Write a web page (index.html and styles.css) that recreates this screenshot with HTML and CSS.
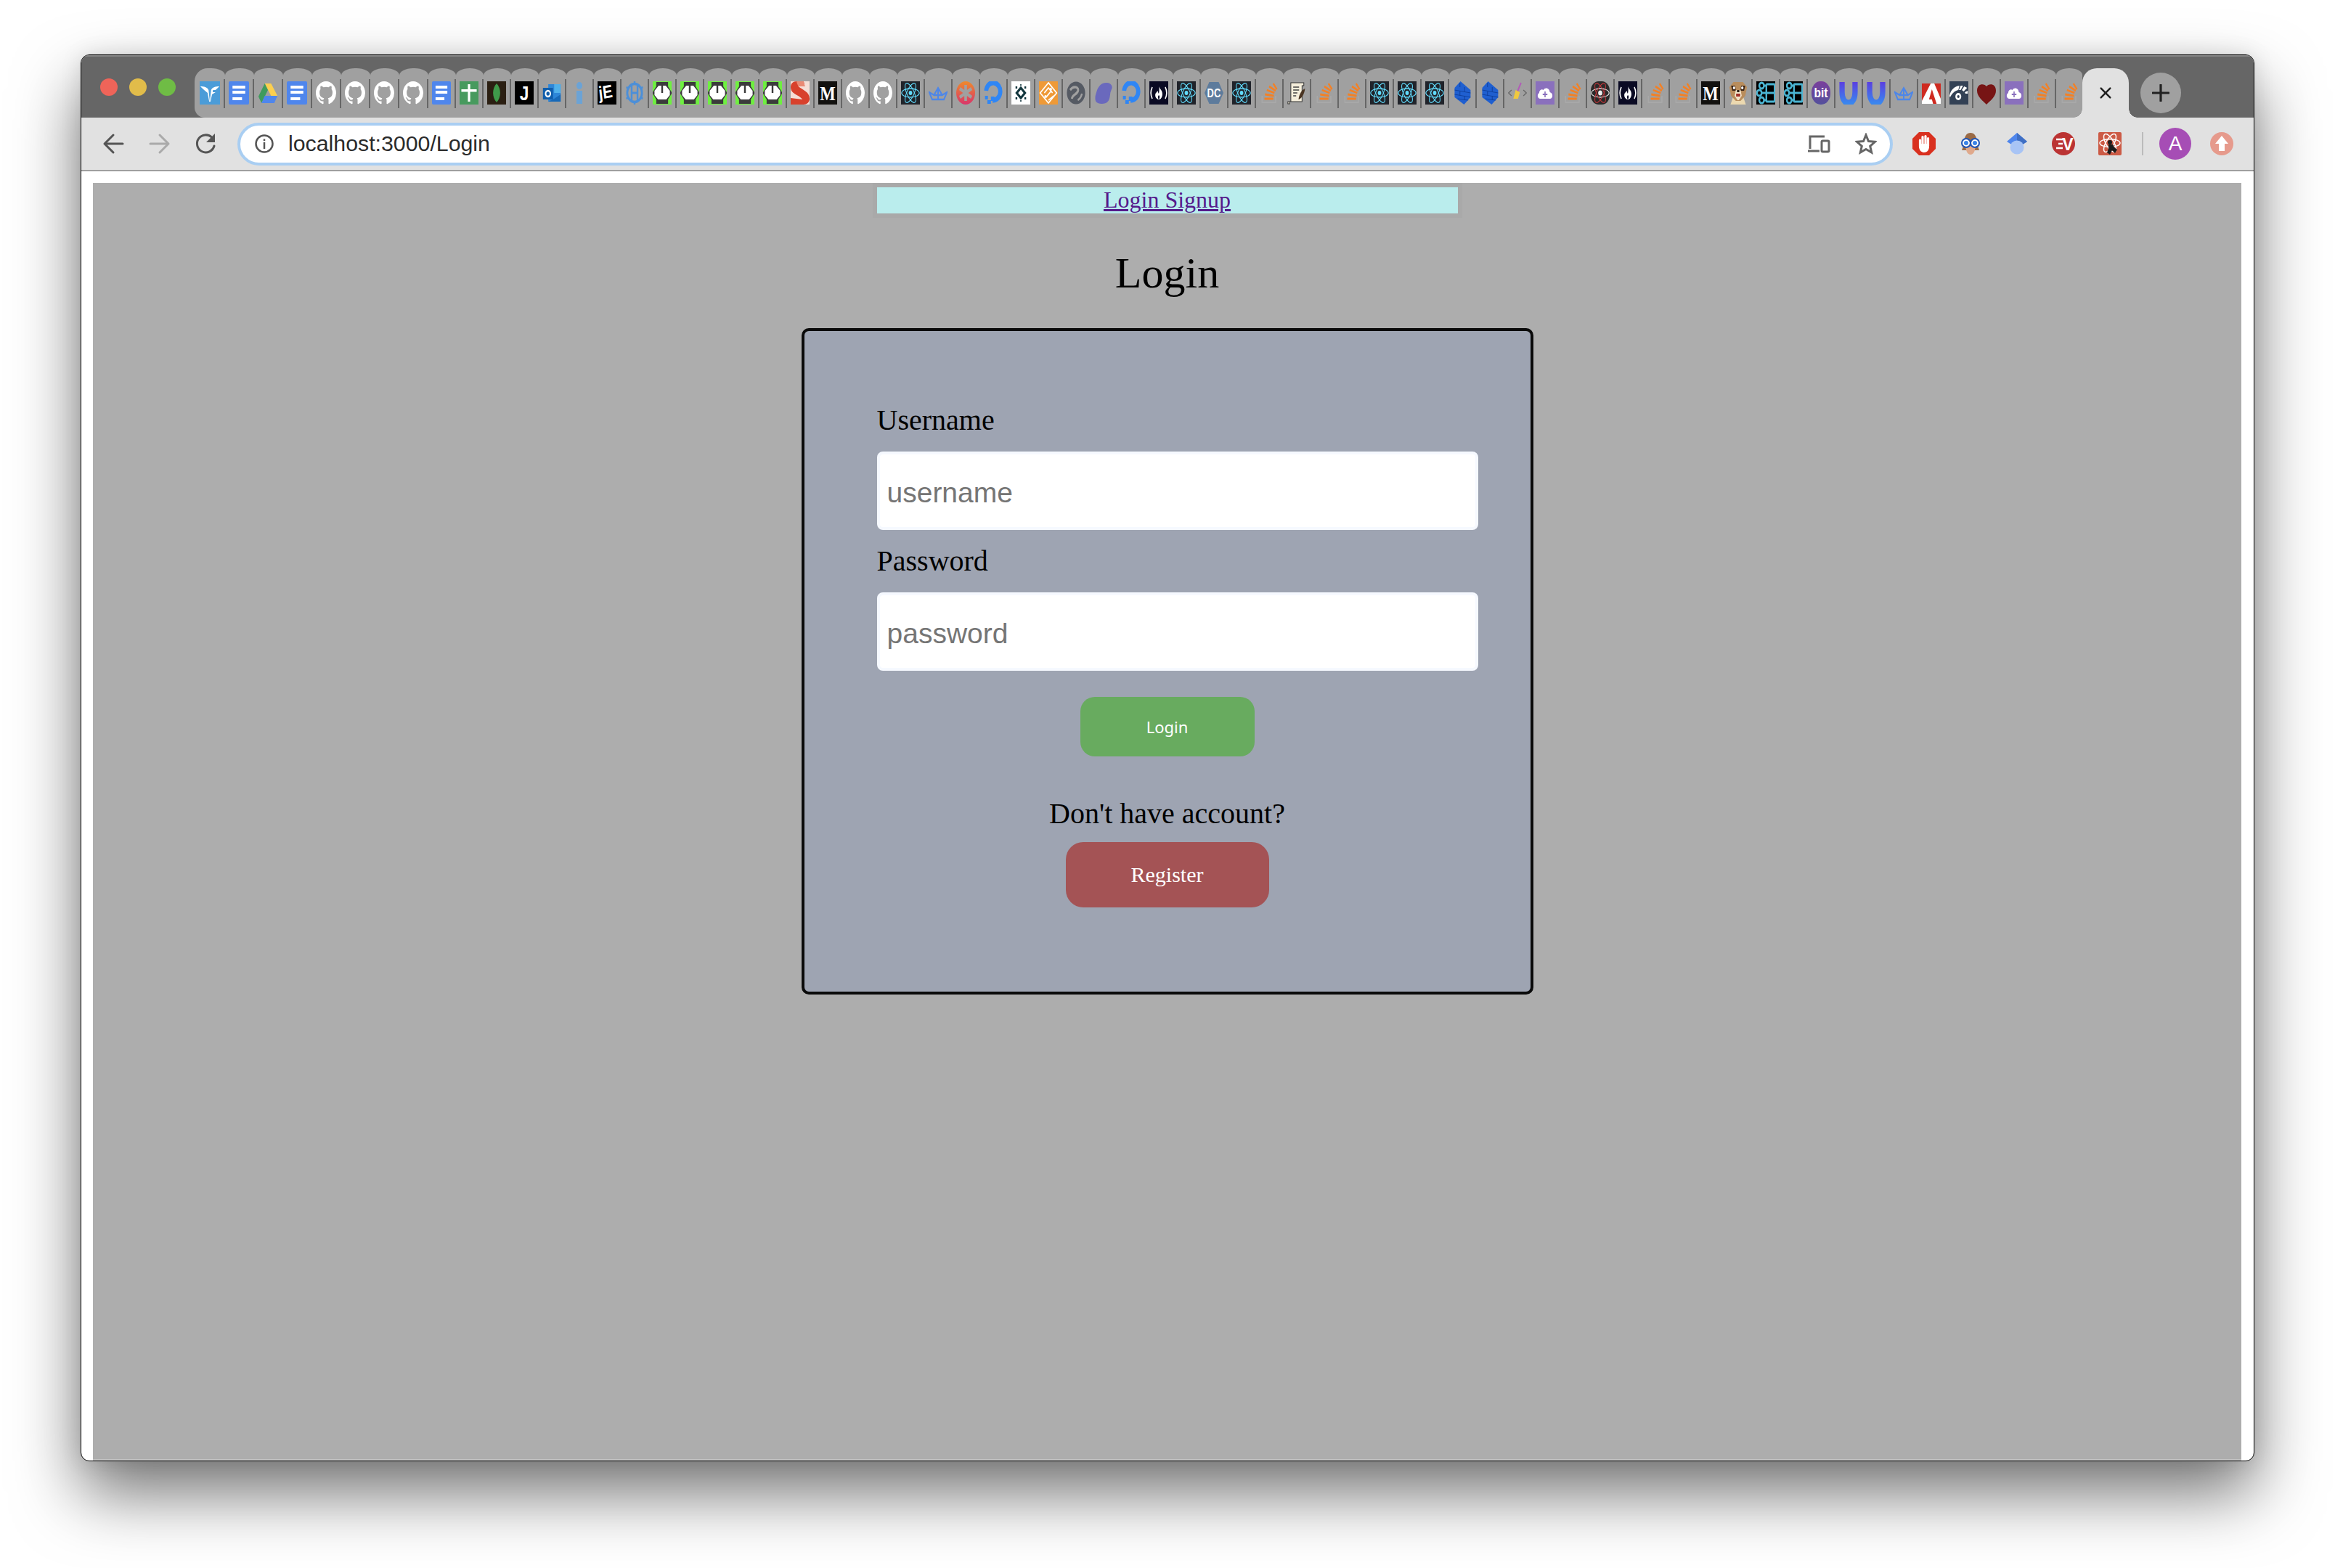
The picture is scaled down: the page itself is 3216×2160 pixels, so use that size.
FILE: index.html
```html
<!DOCTYPE html>
<html lang="en">
<head>
    <meta charset="UTF-8">
    <meta name="viewport" content="width=device-width, initial-scale=1.0">
    <title>Login</title>
    <link rel="stylesheet" href="styles.css">
</head>
<body>
    <!-- Favicons, drawn once and reused in the tab strip -->
    <svg class="icon-defs" aria-hidden="true">
        <defs>
            <linearGradient id="gradStar" x1="0" y1="0" x2="0" y2="1"><stop offset="0" stop-color="#ee8a2c"/><stop offset="1" stop-color="#d8356b"/></linearGradient>
            <linearGradient id="gradU" x1="0" y1="0" x2="0" y2="1"><stop offset="0" stop-color="#5a3fe0"/><stop offset="1" stop-color="#3a86ee"/></linearGradient>
            <linearGradient id="gradBit" x1="0" y1="0" x2="0" y2="1"><stop offset="0" stop-color="#7a3f9c"/><stop offset="1" stop-color="#54509c"/></linearGradient>
            <symbol id="i-vf" viewBox="0 0 32 32" preserveAspectRatio="none"><rect width="32" height="32" fill="#4b9cd8"/><path d="M1 7C7 7 12 8 14 12L16 28L18 12C20 8 25 7 31 7L25 12H21L20.500 15H25L19.500 18L17 28H15L12.500 16L7 12Z" fill="#fff"/></symbol>
            <symbol id="i-doc" viewBox="0 0 32 32" preserveAspectRatio="none"><rect width="32" height="32" rx="2" fill="#4f86ec"/><path d="M6 6H26V10H6ZM6 13H26V17H6ZM6 22H21V26H6Z" fill="#fff"/></symbol>
            <symbol id="i-drive" viewBox="0 0 32 32" preserveAspectRatio="none"><path d="M11 3H21L31 20H21Z" fill="#fbcf4f"/><path d="M11 3L1 21L6 30L16 12Z" fill="#3f9b5c"/><path d="M6 30H26L31 20H11Z" fill="#4f86ec"/></symbol>
            <symbol id="i-gh" viewBox="0 0 16 16" preserveAspectRatio="none"><path fill="#fff" d="M8 0C3.580 0 0 3.580 0 8c0 3.540 2.290 6.530 5.470 7.590.400.070.550-.170.550-.380 0-.190-.010-.820-.010-1.490-2.010.370-2.530-.490-2.690-.940-.090-.230-.480-.940-.820-1.130-.280-.150-.680-.520-.010-.530.630-.010 1.080.580 1.230.820.720 1.210 1.870.870 2.330.660.070-.520.280-.870.510-1.070-1.780-.200-3.640-.890-3.640-3.950 0-.870.310-1.590.820-2.150-.080-.200-.360-1.020.080-2.120 0 0 .670-.210 2.200.820.640-.180 1.320-.270 2-.270.680 0 1.360.090 2 .270 1.530-1.040 2.200-.820 2.200-.820.440 1.100.160 1.920.080 2.120.510.560.820 1.270.820 2.150 0 3.070-1.870 3.750-3.650 3.950.290.250.540.730.540 1.480 0 1.070-.010 1.930-.010 2.200 0 .210.150.460.550.380A8.013 8.013 0 0016 8c0-4.420-3.580-8-8-8z"/></symbol>
            <symbol id="i-sheet" viewBox="0 0 32 32" preserveAspectRatio="none"><rect width="32" height="32" fill="#479a5e"/><path d="M14 4H18V11H29V14.500H18V28H14V14.500H3V11H14Z" fill="#fff"/></symbol>
            <symbol id="i-mongo" viewBox="0 0 32 32" preserveAspectRatio="none"><rect width="32" height="32" fill="#2b1f12"/><path d="M16 3C24 10 24 22 16 29C8 22 8 10 16 3Z" fill="#3f9a4a"/></symbol>
            <symbol id="i-j" viewBox="0 0 32 32" preserveAspectRatio="none"><rect width="32" height="32" fill="#000"/><text x="16" y="26" class="fav-sans" font-size="28" text-anchor="middle" fill="#fff">J</text></symbol>
            <symbol id="i-outlook" viewBox="0 0 32 32" preserveAspectRatio="none"><rect x="10" y="4" width="21" height="24" fill="#2d86d8"/><rect x="20" y="4" width="11" height="12" fill="#50b0ea"/><path d="M10 28H31V18L20 24Z" fill="#1769b8"/><rect x="1" y="9" width="17" height="16" fill="#0f5dab"/><circle cx="9.500" cy="17" r="4" fill="none" stroke="#fff" stroke-width="2.500"/></symbol>
            <symbol id="i-info" viewBox="0 0 32 32" preserveAspectRatio="none"><circle cx="16" cy="6" r="5" fill="#6ba3d6"/><rect x="11" y="13" width="10" height="18" fill="#6ba3d6"/></symbol>
            <symbol id="i-je" viewBox="0 0 32 32" preserveAspectRatio="none"><rect width="32" height="32" fill="#000"/><text class="fav-sans" font-size="25" fill="#fff" transform="rotate(-8 16 16)" x="2" y="23">jE</text></symbol>
            <symbol id="i-helm" viewBox="0 0 32 32" preserveAspectRatio="none"><circle cx="16" cy="16" r="12.500" fill="none" stroke="#4c8fd8" stroke-width="3.500"/><path d="M11 6V26M21 6V26M11 16H21M16 0V4M16 28V32M2 8L6 10M30 8L26 10M2 24L6 22M30 24L26 22" fill="none" stroke="#4c8fd8" stroke-width="3"/></symbol>
            <symbol id="i-power" viewBox="0 0 32 32" preserveAspectRatio="none"><rect width="32" height="32" fill="#6ef03f"/><path d="M6 1H26V7L32 15V17L26 25V31H6V25L0 17V15L6 7Z" fill="#3b3b3b"/><path d="M10 6H22L29 13V19L23 25H9L3 19V13Z" fill="#fff"/><rect x="14.500" y="3" width="3" height="13" fill="#3b3b3b"/></symbol>
            <symbol id="i-s" viewBox="0 0 32 32" preserveAspectRatio="none"><rect width="32" height="32" fill="#f5ded6"/><path d="M0 32V23L20 25C14 18 0 18 0 8C0 3 4 0 10 0H22L24 7L13 7C20 12 32 14 32 24C32 29 27 32 22 32Z" fill="#d8412c"/><path d="M10 0H22L24 7L13 7C12 5 10 2 10 0Z" fill="#e98a74"/></symbol>
            <symbol id="i-m" viewBox="0 0 32 32" preserveAspectRatio="none"><rect width="32" height="32" fill="#12110f"/><text x="16" y="26" class="fav-serif" font-size="28" text-anchor="middle" fill="#fff">M</text></symbol>
            <symbol id="i-react" viewBox="0 0 32 32" preserveAspectRatio="none"><rect width="32" height="32" fill="#20232a"/><g fill="none" stroke="#61dafb" stroke-width="1.300"><ellipse cx="16" cy="16" rx="15" ry="6"/><ellipse cx="16" cy="16" rx="15" ry="6" transform="rotate(60 16 16)"/><ellipse cx="16" cy="16" rx="15" ry="6" transform="rotate(120 16 16)"/></g><circle cx="16" cy="16" r="3" fill="#61dafb"/></symbol>
            <symbol id="i-boat" viewBox="0 0 32 32" preserveAspectRatio="none"><path d="M1 15L9 19L16 9L23 19L31 15L26 25H6ZM9 19H23M16 9V25" fill="none" stroke="#4d86e8" stroke-width="2.400"/></symbol>
            <symbol id="i-star" viewBox="0 0 32 32" preserveAspectRatio="none"><circle cx="16" cy="16" r="16" fill="url(#gradStar)"/><path d="M16 5V27M6 10L26 22M26 10L6 22" stroke="#a0a0a0" stroke-width="4.500"/></symbol>
            <symbol id="i-do" viewBox="0 0 32 32" preserveAspectRatio="none"><path d="M15 26A12 12 0 1 0 4 13" fill="none" stroke="#2f86f5" stroke-width="7"/><path d="M12 21H18V27H12ZM6 26H12V31H6ZM2 20H7V25H2Z" fill="#2f86f5"/></symbol>
            <symbol id="i-diamond" viewBox="0 0 32 32" preserveAspectRatio="none"><rect width="32" height="32" fill="#fff"/><path d="M16 9L23 16L16 23L9 16Z" fill="none" stroke="#12363d" stroke-width="3.500"/><path d="M7 7H10V10H7ZM22 7H25V10H22ZM7 22H10V25H7ZM22 22H25V25H22ZM15 4H17V6H15ZM15 26H17V28H15Z" fill="#12363d"/></symbol>
            <symbol id="i-circuit" viewBox="0 0 32 32" preserveAspectRatio="none"><rect width="32" height="32" fill="#ef9a37"/><path d="M16 2L30 16L16 30L2 16ZM9 16L16 9L23 16M12 22L20 14M16 26L25 20" fill="none" stroke="#fff" stroke-width="1.800"/><circle cx="20" cy="11" r="2" fill="#fff"/><circle cx="11" cy="21" r="2" fill="#fff"/></symbol>
            <symbol id="i-swirl" viewBox="0 0 32 32" preserveAspectRatio="none"><circle cx="16" cy="16" r="15.500" fill="#555a63"/><path d="M6 12C12 5 22 8 19 14C16 19 10 18 9 24" fill="none" stroke="#a0a0a0" stroke-width="3.500"/><path d="M26 17C25 21 23 24 19 26" fill="none" stroke="#a0a0a0" stroke-width="3"/></symbol>
            <symbol id="i-blob" viewBox="0 0 32 32" preserveAspectRatio="none"><path d="M20 2C28 1 33 7 29 12C26 17 28 22 24 27C20 32 7 32 3 28C0 23 3 17 5 12C8 6 13 2 20 2Z" fill="#6a69bd"/></symbol>
            <symbol id="i-fcc" viewBox="0 0 32 32" preserveAspectRatio="none"><rect width="32" height="32" fill="#0a0a23"/><path d="M16 7C18 11 23 13 22 19C21 24 18 25 16 25C14 25 10 23 10 19C10 16 13 15 14 13C15 15 15 16 16 17C17 14 17 10 16 7Z" fill="#fff"/><path d="M16 19C18 20 18 23 16 25C14 23 14 21 16 19Z" fill="#0a0a23"/><path d="M5 8C2 13 2 19 5 24M27 8C30 13 30 19 27 24" fill="none" stroke="#fff" stroke-width="2"/></symbol>
            <symbol id="i-dc" viewBox="0 0 32 32" preserveAspectRatio="none"><path d="M8 1H24L32 16L24 31H8L0 16Z" fill="#5d7b9c"/><text x="16" y="22" class="fav-sans" font-size="16" text-anchor="middle" fill="#fff">DC</text></symbol>
            <symbol id="i-so" viewBox="0 0 32 32" preserveAspectRatio="none"><path d="M8 24H23M9 18L24 20M12 12L25 16M16 7L27 13M23 3L29 11" fill="none" stroke="#f48024" stroke-width="2.800"/><path d="M4 20V29H27V20" fill="none" stroke="#a8a8a8" stroke-width="2"/></symbol>
            <symbol id="i-scroll" viewBox="0 0 32 32" preserveAspectRatio="none"><path d="M6 2H28V6H25V28H4V31H1V28H6Z" fill="#f5eedb" stroke="#333" stroke-width="1.200"/><path d="M10 8H20M10 12H20M10 16H17M10 20H15" stroke="#444" stroke-width="1.300"/><path d="M30 10C24 12 20 18 19 25C24 24 29 18 30 10Z" fill="#4a3422"/></symbol>
            <symbol id="i-stack" viewBox="0 0 32 32" preserveAspectRatio="none"><path d="M13 0L30 12V22L19 32L3 22V9Z" fill="#1f5fd0"/><path d="M3 12L30 16M3 18L30 22M8 24L26 26M12 2V8M20 8V14M12 14V20M20 20V26" fill="none" stroke="#0e3f9c" stroke-width="1"/></symbol>
            <symbol id="i-broom" viewBox="0 0 32 32" preserveAspectRatio="none"><path d="M6 12L1 16L6 20M26 12L31 16L26 20" fill="none" stroke="#666" stroke-width="1.500"/><path d="M22 2L16 14" stroke="#b25cb8" stroke-width="2.500"/><path d="M13 12L20 15L17 24H9Z" fill="#f0c93e"/></symbol>
            <symbol id="i-cloud" viewBox="0 0 32 32" preserveAspectRatio="none"><rect width="32" height="32" fill="#8a70bd"/><path d="M8 24C3 24 2 18 6 16C6 12 11 10 13 12C17 7 24 10 24 15C30 16 30 24 24 24Z" fill="#fff"/><path d="M16 14V22M12 18H20" fill="none" stroke="#8a70bd" stroke-width="2"/></symbol>
            <symbol id="i-atom" viewBox="0 0 32 32" preserveAspectRatio="none"><rect width="32" height="32" rx="13" fill="#2a2a2a"/><g fill="none" stroke-width="1.300"><ellipse cx="16" cy="16" rx="15" ry="6" stroke="#ddd"/><ellipse cx="16" cy="16" rx="15" ry="6" stroke="#c0353a" transform="rotate(60 16 16)"/><ellipse cx="16" cy="16" rx="15" ry="6" stroke="#c0353a" transform="rotate(120 16 16)"/></g><circle cx="16" cy="16" r="3.500" fill="#eee"/></symbol>
            <symbol id="i-meerkat" viewBox="0 0 32 32" preserveAspectRatio="none"><path d="M8 20H24L29 32H3Z" fill="#ecd9b0"/><path d="M8 1H24L31 8L28 20L20 27H12L4 20L1 8Z" fill="#b98d5c"/><path d="M4 6H11L12 13H6ZM21 6H28L26 13H20Z" fill="#3a2416"/><circle cx="9" cy="9" r="2" fill="#fff"/><circle cx="23" cy="9" r="2" fill="#fff"/><path d="M12 12H20L22 20L17 26H15L10 20Z" fill="#f3e6cb"/><rect x="14" y="12" width="4" height="3" fill="#2a1c10"/><rect x="12.500" y="17" width="7" height="4" fill="#a02f28"/></symbol>
            <symbol id="i-chakra" viewBox="0 0 32 32" preserveAspectRatio="none"><rect width="32" height="32" fill="#000"/><g fill="none" stroke="#4ab3d1" stroke-width="3"><rect x="17" y="4" width="14" height="24" rx="1"/><path d="M17 16H31"/><circle cx="9" cy="6" r="4"/><circle cx="5" cy="16" r="4"/><circle cx="9" cy="26" r="4"/><path d="M13 6H17M13 26H17M9 16H17"/></g></symbol>
            <symbol id="i-bit" viewBox="0 0 32 32" preserveAspectRatio="none"><rect width="32" height="32" rx="15" fill="url(#gradBit)"/><text x="16" y="22" class="fav-sans" font-size="19" text-anchor="middle" fill="#fff">bit</text></symbol>
            <symbol id="i-u" viewBox="0 0 32 32" preserveAspectRatio="none"><path d="M5 1V15C5 35 27 35 27 15V1" fill="none" stroke="url(#gradU)" stroke-width="9"/></symbol>
            <symbol id="i-adobe" viewBox="0 0 32 32" preserveAspectRatio="none"><rect y="3" width="32" height="28" fill="#fff"/><path d="M0 3H15L0 27ZM21 3H32V24Z" fill="#cf2a20"/><path d="M17 11L25 31H19L17 25H12Z" fill="#cf2a20"/></symbol>
            <symbol id="i-eye" viewBox="0 0 32 32" preserveAspectRatio="none"><rect width="32" height="32" fill="#334155"/><path d="M0 20C2 12 8 7 17 6L15 12C9 13 5 16 1 22ZM19 6L23 6L19 12L16 12ZM25 7L30 9L24 14L21 12ZM31 13L31 17L27 17L26 15Z" fill="#fff"/><circle cx="15" cy="21" r="5" fill="#fff"/><circle cx="15" cy="21" r="2" fill="#334155"/></symbol>
            <symbol id="i-heart" viewBox="0 0 32 32" preserveAspectRatio="none"><path d="M16 7C19 3 32 2 32 13C32 21 22 27 16 32C10 27 0 21 0 13C0 2 13 3 16 7Z" fill="#771414"/></symbol>
        </defs>
    </svg>

    <div class="window">
        <div class="titlebar">
            <div class="lights">
                <span class="light red"></span>
                <span class="light yellow"></span>
                <span class="light green"></span>
            </div>
            <div class="tabs">
                <div class="tab wide first"><svg class="fav"><use href="#i-vf"/></svg></div>
                <div class="tab wide"><svg class="fav"><use href="#i-doc"/></svg></div>
                <div class="tab wide"><svg class="fav"><use href="#i-drive"/></svg></div>
                <div class="tab wide"><svg class="fav"><use href="#i-doc"/></svg></div>
                <div class="tab wide"><svg class="fav"><use href="#i-gh"/></svg></div>
                <div class="tab wide"><svg class="fav"><use href="#i-gh"/></svg></div>
                <div class="tab wide"><svg class="fav"><use href="#i-gh"/></svg></div>
                <div class="tab wide"><svg class="fav"><use href="#i-gh"/></svg></div>
                <div class="tab"><svg class="fav"><use href="#i-doc"/></svg></div>
                <div class="tab"><svg class="fav"><use href="#i-sheet"/></svg></div>
                <div class="tab"><svg class="fav"><use href="#i-mongo"/></svg></div>
                <div class="tab"><svg class="fav"><use href="#i-j"/></svg></div>
                <div class="tab"><svg class="fav"><use href="#i-outlook"/></svg></div>
                <div class="tab"><svg class="fav"><use href="#i-info"/></svg></div>
                <div class="tab"><svg class="fav"><use href="#i-je"/></svg></div>
                <div class="tab"><svg class="fav"><use href="#i-helm"/></svg></div>
                <div class="tab"><svg class="fav"><use href="#i-power"/></svg></div>
                <div class="tab"><svg class="fav"><use href="#i-power"/></svg></div>
                <div class="tab"><svg class="fav"><use href="#i-power"/></svg></div>
                <div class="tab"><svg class="fav"><use href="#i-power"/></svg></div>
                <div class="tab"><svg class="fav"><use href="#i-power"/></svg></div>
                <div class="tab"><svg class="fav"><use href="#i-s"/></svg></div>
                <div class="tab"><svg class="fav"><use href="#i-m"/></svg></div>
                <div class="tab"><svg class="fav"><use href="#i-gh"/></svg></div>
                <div class="tab"><svg class="fav"><use href="#i-gh"/></svg></div>
                <div class="tab"><svg class="fav"><use href="#i-react"/></svg></div>
                <div class="tab"><svg class="fav"><use href="#i-boat"/></svg></div>
                <div class="tab"><svg class="fav"><use href="#i-star"/></svg></div>
                <div class="tab"><svg class="fav"><use href="#i-do"/></svg></div>
                <div class="tab"><svg class="fav"><use href="#i-diamond"/></svg></div>
                <div class="tab"><svg class="fav"><use href="#i-circuit"/></svg></div>
                <div class="tab"><svg class="fav"><use href="#i-swirl"/></svg></div>
                <div class="tab"><svg class="fav"><use href="#i-blob"/></svg></div>
                <div class="tab"><svg class="fav"><use href="#i-do"/></svg></div>
                <div class="tab"><svg class="fav"><use href="#i-fcc"/></svg></div>
                <div class="tab"><svg class="fav"><use href="#i-react"/></svg></div>
                <div class="tab"><svg class="fav"><use href="#i-dc"/></svg></div>
                <div class="tab"><svg class="fav"><use href="#i-react"/></svg></div>
                <div class="tab"><svg class="fav"><use href="#i-so"/></svg></div>
                <div class="tab"><svg class="fav"><use href="#i-scroll"/></svg></div>
                <div class="tab"><svg class="fav"><use href="#i-so"/></svg></div>
                <div class="tab"><svg class="fav"><use href="#i-so"/></svg></div>
                <div class="tab"><svg class="fav"><use href="#i-react"/></svg></div>
                <div class="tab"><svg class="fav"><use href="#i-react"/></svg></div>
                <div class="tab"><svg class="fav"><use href="#i-react"/></svg></div>
                <div class="tab"><svg class="fav"><use href="#i-stack"/></svg></div>
                <div class="tab"><svg class="fav"><use href="#i-stack"/></svg></div>
                <div class="tab"><svg class="fav"><use href="#i-broom"/></svg></div>
                <div class="tab"><svg class="fav"><use href="#i-cloud"/></svg></div>
                <div class="tab"><svg class="fav"><use href="#i-so"/></svg></div>
                <div class="tab"><svg class="fav"><use href="#i-atom"/></svg></div>
                <div class="tab"><svg class="fav"><use href="#i-fcc"/></svg></div>
                <div class="tab"><svg class="fav"><use href="#i-so"/></svg></div>
                <div class="tab"><svg class="fav"><use href="#i-so"/></svg></div>
                <div class="tab"><svg class="fav"><use href="#i-m"/></svg></div>
                <div class="tab"><svg class="fav"><use href="#i-meerkat"/></svg></div>
                <div class="tab"><svg class="fav"><use href="#i-chakra"/></svg></div>
                <div class="tab"><svg class="fav"><use href="#i-chakra"/></svg></div>
                <div class="tab"><svg class="fav"><use href="#i-bit"/></svg></div>
                <div class="tab"><svg class="fav"><use href="#i-u"/></svg></div>
                <div class="tab"><svg class="fav"><use href="#i-u"/></svg></div>
                <div class="tab"><svg class="fav"><use href="#i-boat"/></svg></div>
                <div class="tab"><svg class="fav"><use href="#i-adobe"/></svg></div>
                <div class="tab"><svg class="fav"><use href="#i-eye"/></svg></div>
                <div class="tab"><svg class="fav"><use href="#i-heart"/></svg></div>
                <div class="tab"><svg class="fav"><use href="#i-cloud"/></svg></div>
                <div class="tab"><svg class="fav"><use href="#i-so"/></svg></div>
                <div class="tab last"><svg class="fav"><use href="#i-so"/></svg></div>
                <div class="tab-active">
                    <svg class="close-icon" viewBox="0 0 20 20"><path d="M3 3L17 17M17 3L3 17"/></svg>
                </div>
            </div>
            <div class="new-tab">
                <svg class="plus-icon" viewBox="0 0 24 24"><path d="M12 1V23M1 12H23"/></svg>
            </div>
        </div>

        <div class="toolbar">
            <svg class="nav-icon" viewBox="0 0 32 32"><path d="M29 16H4M16 4L4 16L16 28"/></svg>
            <svg class="nav-icon disabled" viewBox="0 0 32 32"><path d="M3 16H28M16 4L28 16L16 28"/></svg>
            <svg class="nav-icon" viewBox="0 0 32 32"><path d="M27 19A12 12 0 1 1 24 7.500"/><path class="solid" d="M28 2V14H16Z"/></svg>
            <div class="address">
                <svg class="info-icon" viewBox="0 0 26 26"><circle cx="13" cy="13" r="11.500"/><path d="M13 11V20M13 6.500V9"/></svg>
                <span class="url">localhost:3000/Login</span>
                <svg class="device-icon" viewBox="0 0 32 28"><path d="M4 21V4H24M1 24H17"/><rect x="20" y="10" width="10" height="15" rx="1.500"/></svg>
                <svg class="star-icon" viewBox="0 0 30 30"><path d="M15 3L18.500 11.500L27.500 12.300L20.700 18.300L22.700 27L15 22.500L7.300 27L9.300 18.300L2.500 12.300L11.500 11.500Z"/></svg>
            </div>
            <div class="extensions">
                <svg class="ext" viewBox="0 0 32 32"><path d="M9 0H23L32 9V23L23 32H9L0 23V9Z" fill="#d9301f"/><path d="M10.500 20V11M14 18V6.500M18 18V5.500M21.500 19V8.500" stroke="#fff" stroke-width="3.200" stroke-linecap="round"/><path d="M9 16V21C10 26 13 28 16 28C20 28 23 25 23 20V17L20 18V16H9Z" fill="#fff"/></svg>
                <svg class="ext" viewBox="0 0 32 32"><path d="M7 16C7 5 11 1 16 1C21 1 25 5 25 16L28 25H4Z" fill="#9a6a45"/><path d="M9 16H23C23 26 20 31 16 31C12 31 9 26 9 16Z" fill="#e0a98c"/><g fill="#3a83e8" stroke="#fff" stroke-width="2"><circle cx="10" cy="15" r="4"/><circle cx="22" cy="15" r="4"/></g><g fill="none" stroke="#1f55b8" stroke-width="2"><circle cx="10" cy="15" r="6"/><circle cx="22" cy="15" r="6"/></g></svg>
                <svg class="ext" viewBox="0 0 32 32"><path d="M16 1L30 13L16 22L2 13Z" fill="#4f86ec"/><path d="M16 1L30 13L16 22Z" fill="#3f6fc4"/><circle cx="16" cy="21" r="9.500" fill="#a8c4f5"/></svg>
                <svg class="ext" viewBox="0 0 32 32"><circle cx="16" cy="16" r="16" fill="#bb3333"/><path d="M6 10H15M9 16H15M6 22H15" stroke="#fff" stroke-width="2.500"/><text x="22" y="25" class="fav-sans" font-size="23" text-anchor="middle" fill="#fff">V</text></svg>
                <svg class="ext" viewBox="0 0 32 32"><rect width="32" height="32" rx="2" fill="#cc5a45"/><g fill="none" stroke="#fff" stroke-width="1.500"><ellipse cx="16" cy="15" rx="14" ry="5.500"/><ellipse cx="16" cy="15" rx="14" ry="5.500" transform="rotate(60 16 15)"/><ellipse cx="16" cy="15" rx="14" ry="5.500" transform="rotate(120 16 15)"/></g><circle cx="16" cy="14" r="3" fill="#1c1c1c"/><path d="M14 17H20L22 21L26 24L23 29L19 25L16 31L12 28L14 23Z" fill="#1c1c1c"/></svg>
            </div>
            <span class="tool-sep"></span>
            <span class="avatar">A</span>
            <svg class="update" viewBox="0 0 32 32"><circle cx="16" cy="16" r="16" fill="#e69a8c"/><path d="M16 5L25 16H20V26H12V16H7Z" fill="#fff"/></svg>
        </div>

        <div class="page">
            <div class="page-bg">
                <nav class="topnav"><a href="#">Login Signup</a></nav>
                <h1>Login</h1>
                <form class="card">
                    <label for="username">Username</label>
                    <input type="text" id="username" placeholder="username">
                    <label for="password">Password</label>
                    <input type="password" id="password" placeholder="password">
                    <button type="button" class="btn-login">Login</button>
                    <p class="no-account">Don't have account?</p>
                    <button type="button" class="btn-register">Register</button>
                </form>
            </div>
        </div>
    </div>
</body>
</html>
```

FILE: styles.css
```css
* {
    box-sizing: border-box;
}
html {
    height: 2160px;
    overflow: hidden;
}
body {
    margin: 0;
    height: 2160px;
    padding: 75px 0 0 111px;
    background-color: #fff;
    overflow: hidden;
}
.icon-defs {
    position: absolute;
    width: 0;
    height: 0;
}
.fav-sans {
    font-family: "Liberation Sans", sans-serif;
    font-weight: bold;
}
.fav-serif {
    font-family: "Liberation Serif", serif;
    font-weight: bold;
}

/* browser window */
.window {
    display: flex;
    flex-direction: column;
    width: 2994px;
    height: 1938px;
    border: 1px solid #000;
    border-radius: 12px;
    background: #fff;
    box-shadow: 0 44px 90px rgba(0, 0, 0, 0.55), 0 0 30px rgba(0, 0, 0, 0.1);
    overflow: hidden;
}
.titlebar {
    display: flex;
    flex: none;
    height: 86px;
    padding-top: 16px;
    background-color: #666;
    border-top: 2px solid #858585;
}
.lights {
    display: flex;
    flex: none;
    gap: 16px;
    width: 156px;
    padding: 14px 0 0 26px;
}
.light {
    width: 24px;
    height: 24px;
    border-radius: 50%;
}
.red { background-color: #ef6459; }
.yellow { background-color: #e1bc4a; }
.green { background-color: #6fbc45; }

/* tabs */
.tabs {
    display: flex;
    flex: none;
}
.tab {
    display: flex;
    align-items: flex-start;
    justify-content: center;
    width: 38px;
    height: 68px;
    padding: 18px 2px 0 0;
    border-radius: 19px 19px 0 0 / 10px 10px 0 0;
    background: linear-gradient(#666, #666) right 15px / 2px 40px no-repeat, #a0a0a0;
}
.tab.wide {
    width: 40px;
}
.tab.first {
    width: 42px;
    padding-left: 2px;
    border-bottom-left-radius: 14px;
    border-top-left-radius: 18px;
}
.tab.last {
    width: 36px;
    padding-right: 0;
    background: #a0a0a0;
}
.fav {
    flex: none;
    width: 26px;
    height: 32px;
}
.wide .fav {
    width: 28px;
}
.tab-active {
    position: relative;
    display: flex;
    align-items: center;
    justify-content: center;
    width: 64px;
    height: 68px;
    border-radius: 20px 20px 0 0;
    background-color: #e1e1e1;
}
.tab-active::before,
.tab-active::after {
    content: "";
    position: absolute;
    bottom: 0;
    width: 12px;
    height: 12px;
}
.tab-active::before {
    left: -12px;
    background: radial-gradient(circle at 0 0, transparent 11.500px, #e1e1e1 12px);
}
.tab-active::after {
    right: -12px;
    background: radial-gradient(circle at 100% 0, transparent 11.500px, #e1e1e1 12px);
}
.close-icon {
    width: 18px;
    height: 22px;
    fill: none;
    stroke: #222;
    stroke-width: 2.800;
    stroke-linecap: round;
}
.new-tab {
    display: flex;
    align-items: center;
    justify-content: center;
    flex: none;
    width: 56px;
    height: 56px;
    margin: 6px 0 0 16px;
    border-radius: 50%;
    background-color: #a0a0a0;
}
.plus-icon {
    width: 24px;
    height: 24px;
    fill: none;
    stroke: #222;
    stroke-width: 3.200;
    stroke-linecap: round;
}

/* toolbar */
.toolbar {
    display: flex;
    flex: none;
    align-items: center;
    height: 74px;
    padding-left: 28px;
    gap: 32px;
    background-color: #e1e1e1;
    border-bottom: 2px solid #9f9f9f;
}
.nav-icon {
    flex: none;
    width: 32px;
    height: 32px;
    fill: none;
    stroke: #555;
    stroke-width: 3;
    stroke-linecap: round;
    stroke-linejoin: round;
}
.nav-icon .solid {
    fill: #555;
    stroke: none;
}
.nav-icon.disabled {
    stroke: #aaa;
}
.address {
    display: flex;
    flex: none;
    align-items: center;
    width: 2280px;
    height: 59px;
    margin-left: -5px;
    padding: 0 18px 0 20px;
    border: 4px solid #a9cef2;
    border-radius: 30px;
    background-color: #fff;
}
.info-icon {
    flex: none;
    width: 26px;
    height: 26px;
    fill: none;
    stroke: #555;
    stroke-width: 2.500;
}
.url {
    flex: 1;
    margin-left: 20px;
    font-family: "Liberation Sans", sans-serif;
    font-size: 30.300px;
    color: #2b2b2b;
}
.device-icon {
    flex: none;
    width: 32px;
    height: 28px;
    fill: none;
    stroke: #666;
    stroke-width: 3;
}
.star-icon {
    flex: none;
    width: 30px;
    height: 30px;
    margin-left: 34px;
    fill: none;
    stroke: #666;
    stroke-width: 3;
}
.extensions {
    display: flex;
    flex: none;
    gap: 32px;
    margin-left: -5px;
}
.ext {
    flex: none;
    width: 32px;
    height: 32px;
}
.tool-sep {
    flex: none;
    width: 2px;
    height: 32px;
    margin-left: -4px;
    background-color: #bbb;
}
.avatar {
    flex: none;
    width: 44px;
    height: 44px;
    margin-left: -10px;
    border-radius: 50%;
    background-color: #a64db5;
    color: #fff;
    font-family: "Liberation Sans", sans-serif;
    font-size: 28px;
    line-height: 44px;
    text-align: center;
}
.update {
    flex: none;
    width: 32px;
    height: 32px;
    margin-left: -6px;
}

/* the page itself */
.page {
    flex: 1;
    padding: 16px 17px 0 16px;
}
.page-bg {
    height: 100%;
    padding-top: 6px;
    background-color: #adadad;
    border-bottom: 2px solid #c4c4c4;
    font-family: "Liberation Serif", serif;
    text-align: center;
}
.topnav {
    width: 800px;
    height: 36px;
    margin: 0 auto;
    background-color: #baeded;
    box-shadow: 0 0 0 6px rgba(0, 0, 0, 0.02);
    font-size: 32px;
    line-height: 35px;
}
.topnav a {
    color: #551a8b;
}
h1 {
    margin: 48px 0 41px;
    font-size: 60px;
    font-weight: normal;
    line-height: 69px;
    color: #000;
}
.card {
    width: 1008px;
    margin: 0 auto;
    padding: 100px 100px 116px;
    border: 4px solid #0a0a0a;
    border-radius: 10px;
    background-color: #9ea4b2;
    text-align: center;
}
label {
    display: block;
    margin-bottom: 20px;
    font-size: 40px;
    line-height: 46px;
    text-align: left;
}
input {
    display: block;
    width: 828px;
    height: 108px;
    margin-bottom: 20px;
    padding: 6px 10px 0;
    border: 4px solid #f6f9ff;
    border-radius: 8px;
    background-color: #fff;
    font-family: "Liberation Sans", sans-serif;
    font-size: 39px;
}
input::placeholder {
    color: #757575;
}
button {
    display: block;
    margin: 0 auto;
    border: 0;
    color: #fff;
}
.btn-login {
    width: 240px;
    height: 82px;
    margin-top: 36px;
    border-radius: 20px;
    background-color: #68ab5f;
    font-family: "Noto Sans", sans-serif;
    font-size: 22px;
}
.no-account {
    margin: 56px 0 16px;
    font-size: 40px;
    line-height: 46px;
}
.btn-register {
    width: 280px;
    height: 90px;
    border-radius: 24px;
    background-color: #a45355;
    font-family: "Liberation Serif", serif;
    font-size: 30px;
}
```
